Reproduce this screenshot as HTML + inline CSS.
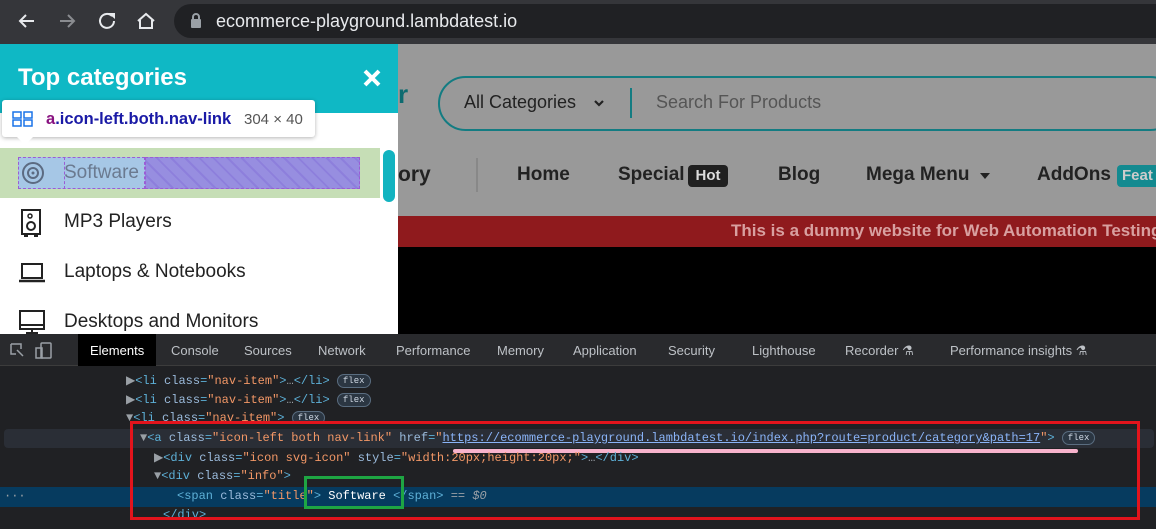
<!DOCTYPE html>
<html><head><meta charset="utf-8"><style>
*{margin:0;padding:0;box-sizing:border-box}
body{width:1156px;height:529px;overflow:hidden;background:#202124;font-family:"Liberation Sans",sans-serif;position:relative}
.abs{position:absolute}
.mono{font-family:"Liberation Mono",monospace;font-size:12px;white-space:nowrap}
.t{color:#5db0d7}.at{color:#9bbbdc}.v{color:#f29766}.g{color:#9aa0a6}
.flex{display:inline-block;border:1px solid #5a6d80;border-radius:9px;font-size:9px;padding:0 5px;color:#cfd8e3;line-height:12px;vertical-align:middle;background:#2b3642}
</style></head><body>
<!-- browser bar -->
<div class="abs" style="left:0;top:0;width:1156px;height:44px;background:#35363a"></div>
<div class="abs" style="left:174px;top:4px;width:1000px;height:34px;border-radius:17px;background:#202124"></div>
<svg class="abs" style="left:14px;top:10px" width="150" height="22" viewBox="0 0 150 22">
<path d="M20 11H6M12 5L6 11l6 6" stroke="#e8eaed" stroke-width="2" fill="none"/>
<path d="M46 11H60M54 5l6 6-6 6" stroke="#8a8c90" stroke-width="2" fill="none"/>
<path d="M98 6a7 7 0 1 0 2 5" stroke="#e8eaed" stroke-width="2" fill="none"/><path d="M94 3h7v6z" fill="#e8eaed"/>
<path d="M124 11l8-7 8 7M126 10v8h12v-8" stroke="#e8eaed" stroke-width="2" fill="none"/>
</svg>
<svg class="abs" style="left:190px;top:13px" width="12" height="16"><rect x="1" y="6" width="10" height="9" rx="1" fill="#9aa0a6"/><path d="M3 7V4a3 3 0 0 1 6 0v3" stroke="#9aa0a6" stroke-width="2" fill="none"/></svg>
<div class="abs" style="left:216px;top:11px;color:#e8eaed;font-size:18px">ecommerce-playground.lambdatest.io</div>
<!-- page -->
<div class="abs" style="left:0;top:44px;width:1156px;height:290px;background:#999"></div>
<div class="abs" style="left:398px;top:84px;color:#0d6b70;font-weight:bold;font-size:26px;line-height:20px">r</div>
<div class="abs" style="left:438px;top:76px;width:740px;height:55px;border:2px solid #137c82;border-radius:28px"></div>
<div class="abs" style="left:464px;top:92px;font-size:18px;color:#222">All Categories</div>
<svg class="abs" style="left:593px;top:99px" width="12" height="10"><path d="M2 2l4 4 4-4" stroke="#222" stroke-width="2.2" fill="none"/></svg>
<div class="abs" style="left:630px;top:88px;width:2px;height:30px;background:#137c82"></div>
<div class="abs" style="left:656px;top:92px;font-size:18px;color:#555">Search For Products</div>
<div class="abs" style="left:398px;top:163px;font-size:21px;color:#222;font-weight:bold">ory</div>
<div class="abs" style="left:476px;top:158px;width:2px;height:34px;background:#888"></div>
<div class="abs" style="top:164px;left:517px;font-size:19px;color:#222;font-weight:bold;white-space:nowrap">Home</div>
<div class="abs" style="top:164px;left:618px;font-size:19px;color:#222;font-weight:bold">Special</div>
<div class="abs" style="top:165px;left:688px;width:40px;height:22px;background:#202020;border-radius:4px;color:#ddd;font-size:15px;font-weight:bold;text-align:center;line-height:21px">Hot</div>
<div class="abs" style="top:164px;left:778px;font-size:19px;color:#222;font-weight:bold">Blog</div>
<div class="abs" style="top:164px;left:866px;font-size:19px;color:#222;font-weight:bold">Mega Menu</div>
<svg class="abs" style="left:979px;top:172px" width="12" height="8"><path d="M1 1h10L6 7z" fill="#222"/></svg>
<div class="abs" style="top:164px;left:1037px;font-size:19px;color:#222;font-weight:bold">AddOns</div>
<div class="abs" style="top:165px;left:1117px;width:50px;height:22px;background:#138a90;border-radius:4px;color:#ccc;font-size:15px;font-weight:bold;line-height:21px;padding-left:5px">Feat</div>
<div class="abs" style="left:398px;top:216px;width:758px;height:31px;background:#8f1a1d"></div>
<div class="abs" style="left:731px;top:221px;font-size:17px;color:#d8a0a0;font-weight:bold;white-space:nowrap">This is a dummy website for Web Automation Testing</div>
<div class="abs" style="left:398px;top:247px;width:758px;height:87px;background:#000"></div>
<!-- panel -->
<div class="abs" style="left:0;top:44px;width:398px;height:290px;background:#fff"></div>
<div class="abs" style="left:0;top:44px;width:398px;height:69px;background:#0fb8c5"></div>
<div class="abs" style="left:18px;top:64px;color:#fff;font-size:24px;font-weight:bold">Top categories</div>
<svg class="abs" style="left:362px;top:68px" width="20" height="20"><path d="M3 3l14 14M17 3L3 17" stroke="#fff" stroke-width="4"/></svg>
<div class="abs" style="left:0;top:148px;width:380px;height:50px;background:#c6deb6"></div>
<div class="abs" style="left:18px;top:157px;width:127px;height:32px;background:#a6c7e6;border:1px dashed #9b5cd6"></div>
<div class="abs" style="left:64px;top:157px;width:1px;height:32px;border-left:1px dashed #9b5cd6"></div>
<div class="abs" style="left:145px;top:157px;width:215px;height:32px;background:repeating-linear-gradient(45deg,#978ee0 0 8px,#8d7fdc 8px 10px);border:1px dashed #9b5cd6"></div>
<svg class="abs" style="left:20px;top:160px" width="26" height="26"><circle cx="13" cy="13" r="10" stroke="#5c6b82" stroke-width="2" fill="none"/><circle cx="13" cy="13" r="5" stroke="#5c6b82" stroke-width="2" fill="none"/><circle cx="13" cy="13" r="1.5" fill="#5c6b82"/></svg>
<div class="abs" style="left:64px;top:162px;font-size:19px;color:#6b7a90">Software</div>
<div class="abs" style="left:383px;top:150px;width:12px;height:52px;border-radius:6px;background:#12b3c0"></div>
<svg class="abs" style="left:20px;top:209px" width="24" height="28"><rect x="2" y="1" width="18" height="24" stroke="#222" stroke-width="2" fill="none"/><circle cx="11" cy="17" r="4" stroke="#222" stroke-width="2" fill="none"/><circle cx="10" cy="7" r="2" stroke="#222" stroke-width="1.5" fill="none"/><path d="M4 27h4M14 27h4" stroke="#222" stroke-width="2"/></svg>
<div class="abs" style="left:64px;top:211px;font-size:19px;color:#222">MP3 Players</div>
<svg class="abs" style="left:18px;top:262px" width="28" height="22"><rect x="4" y="2" width="20" height="14" stroke="#222" stroke-width="2" fill="none"/><path d="M1 19h26" stroke="#222" stroke-width="2.5"/></svg>
<div class="abs" style="left:64px;top:261px;font-size:19px;color:#222">Laptops &amp; Notebooks</div>
<svg class="abs" style="left:18px;top:309px" width="28" height="25"><rect x="2" y="2" width="24" height="18" stroke="#222" stroke-width="2" fill="none"/><path d="M2 16h24M14 20v4M8 24h12" stroke="#222" stroke-width="2"/></svg>
<div class="abs" style="left:64px;top:311px;font-size:19px;color:#222">Desktops and Monitors</div>
<!-- tooltip -->
<div class="abs" style="left:2px;top:100px;width:313px;height:37px;background:#fff;border-radius:3px;box-shadow:0 1px 4px rgba(0,0,0,.3)"></div>
<div class="abs" style="left:17px;top:137px;width:0;height:0;border-left:8px solid transparent;border-right:8px solid transparent;border-top:8px solid #fff"></div>
<svg class="abs" style="left:12px;top:111px" width="22" height="16"><g stroke="#1a73e8" stroke-width="1.5" fill="none"><rect x="1" y="1" width="8" height="6"/><rect x="12" y="1" width="8" height="6"/><rect x="1" y="9" width="8" height="6"/><rect x="12" y="9" width="8" height="6"/></g></svg>
<div class="abs" style="left:46px;top:110px;font-size:16.5px;font-weight:bold;color:#1a1aa6;white-space:nowrap"><span style="color:#881280">a</span>.icon-left.both.nav-link</div>
<div class="abs" style="left:244px;top:111px;font-size:15px;color:#555">304 × 40</div>
<!-- devtools -->
<div class="abs" style="left:0;top:334px;width:1156px;height:32px;background:#292a2d;border-bottom:1px solid #3c3c3c"></div>
<svg class="abs" style="left:8px;top:341px" width="50" height="18"><path d="M3 3h10v5M3 3v10h5M9 9l6 6" stroke="#9aa0a6" stroke-width="1.5" fill="none"/><rect x="33" y="2" width="10" height="15" rx="1" stroke="#9aa0a6" stroke-width="1.5" fill="none"/><rect x="28" y="7" width="6" height="10" stroke="#9aa0a6" stroke-width="1.5" fill="none"/></svg>
<div class="abs" style="left:78px;top:334px;width:78px;height:32px;background:#000"></div>
<div class="abs" style="top:343px;left:0;width:1156px;font-size:13px;color:#bdc1c6;white-space:nowrap">
<span class="abs" style="left:90px;color:#fff">Elements</span><span class="abs" style="left:171px">Console</span><span class="abs" style="left:244px">Sources</span><span class="abs" style="left:318px">Network</span><span class="abs" style="left:396px">Performance</span><span class="abs" style="left:497px">Memory</span><span class="abs" style="left:573px">Application</span><span class="abs" style="left:668px">Security</span><span class="abs" style="left:752px">Lighthouse</span><span class="abs" style="left:845px">Recorder ⚗</span><span class="abs" style="left:950px">Performance insights ⚗</span></div>
<div class="abs" style="left:4px;top:429px;width:1150px;height:19px;background:#2a2e36;border-radius:4px"></div>
<div class="abs" style="left:0;top:487px;width:1156px;height:20px;background:#063b5f"></div>
<div class="abs mono" style="left:126px;top:373px"><span class="g">▶</span><span class="t">&lt;li </span><span class="at">class</span><span class="t">=</span><span class="v">"nav-item"</span><span class="t">&gt;</span><span class="g">…</span><span class="t">&lt;/li&gt;</span> <span class="flex">flex</span></div>
<div class="abs mono" style="left:126px;top:392px"><span class="g">▶</span><span class="t">&lt;li </span><span class="at">class</span><span class="t">=</span><span class="v">"nav-item"</span><span class="t">&gt;</span><span class="g">…</span><span class="t">&lt;/li&gt;</span> <span class="flex">flex</span></div>
<div class="abs mono" style="left:126px;top:411px;height:11px;overflow:hidden"><span class="g">▼</span><span class="t">&lt;li </span><span class="at">class</span><span class="t">=</span><span class="v">"nav-item"</span><span class="t">&gt;</span> <span class="flex">flex</span></div>
<div class="abs mono" style="left:140px;top:431px"><span class="g">▼</span><span class="t">&lt;a </span><span class="at">class</span><span class="t">=</span><span class="v">"icon-left both nav-link"</span> <span class="at">href</span><span class="t">=</span><span class="v">"</span><span style="color:#8ab4f8;text-decoration:underline">https://ecommerce-playground.lambdatest.io/index.php?route=product/category&amp;path=17</span><span class="v">"</span><span class="t">&gt;</span> <span class="flex">flex</span></div>
<div class="abs" style="left:453px;top:449px;width:625px;height:4px;background:#f7b3cc;border-radius:2px"></div>
<div class="abs mono" style="left:154px;top:450px"><span class="g">▶</span><span class="t">&lt;div </span><span class="at">class</span><span class="t">=</span><span class="v">"icon svg-icon"</span> <span class="at">style</span><span class="t">=</span><span class="v">"width:20px;height:20px;"</span><span class="t">&gt;</span><span class="g">…</span><span class="t">&lt;/div&gt;</span></div>
<div class="abs mono" style="left:154px;top:469px"><span class="g">▼</span><span class="t">&lt;div </span><span class="at">class</span><span class="t">=</span><span class="v">"info"</span><span class="t">&gt;</span></div>
<div class="abs mono" style="left:4px;top:489px;color:#9aa0a6">···</div>
<div class="abs mono" style="left:177px;top:489px"><span class="t">&lt;span </span><span class="at">class</span><span class="t">=</span><span class="v">"title"</span><span class="t">&gt;</span> <span style="color:#fff">Software</span> <span class="t">&lt;/span&gt;</span> <span class="g">== <i>$0</i></span></div>
<div class="abs mono" style="left:163px;top:508px;height:10px;overflow:hidden"><span class="t">&lt;/div&gt;</span></div>
<div class="abs" style="left:130px;top:421px;width:1010px;height:99px;border:3px solid #e3141c"></div>
<div class="abs" style="left:304px;top:476px;width:100px;height:33px;border:3px solid #1ea543"></div>
</body></html>
